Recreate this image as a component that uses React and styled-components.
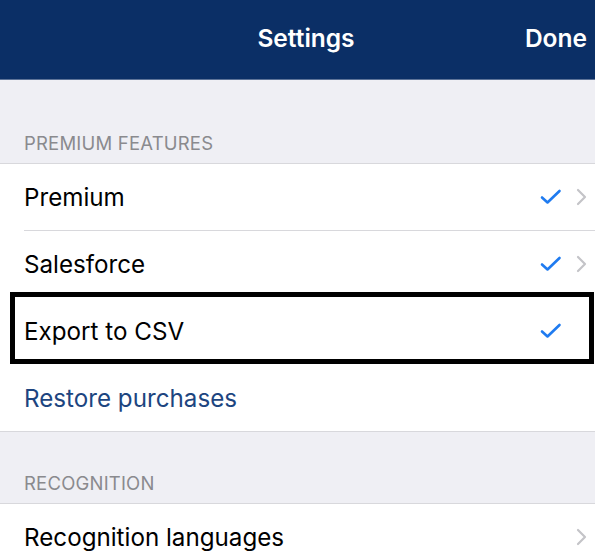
import React from "react";
import styled, { createGlobalStyle } from "styled-components";

const GlobalStyle = createGlobalStyle`
  html, body {
    margin: 0;
    padding: 0;
    background: #efeff4;
    font-family: Inter, "Liberation Sans", Arial, sans-serif;
    -webkit-font-smoothing: antialiased;
  }
`;

const Page = styled.div`
  width: 595px;
  height: 558px;
  overflow: hidden;
  background: #efeff4;
`;

const NavBar = styled.div`
  height: 79px;
  background: #0b2f66;
  border-bottom: 1px solid #5d7398;
  display: grid;
  grid-template-columns: 1fr auto 1fr;
  align-items: center;
  color: #ffffff;
  font-size: 24.5px;
  font-weight: 600;
`;

const Title = styled.div`
  padding-left: 17px;
  padding-bottom: 3px;
`;

const DoneButton = styled.div`
  justify-self: end;
  padding-right: 8px;
  padding-bottom: 3px;
`;

const SectionHeader = styled.div`
  height: ${(p) => p.$height}px;
  display: flex;
  align-items: flex-end;
  box-sizing: border-box;
  padding: 0 24px 9px;
  color: #8a8a8e;
  font-size: 18.5px;
  letter-spacing: 0.2px;
  border-bottom: 1px solid #d8d8dc;
`;

const Group = styled.div`
  background: #ffffff;
  border-bottom: 1px solid #d8d8dc;
`;

const Row = styled.div`
  position: relative;
  height: 66px;
  display: flex;
  align-items: center;
  padding: 0 8px 0 24px;
  font-size: 24.2px;
  color: ${(p) => (p.$link ? "#1d4580" : "#000000")};

  & + & {
    border-top: 1px solid transparent;
  }
  & + &::before {
    content: "";
    position: absolute;
    left: 24px;
    right: 0;
    top: -1px;
    height: 1px;
    background: #d8d8dc;
  }
  ${(p) =>
    p.$highlight &&
    `
    &::after {
      content: "";
      position: absolute;
      left: 10px;
      right: 1px;
      top: -6px;
      height: 72px;
      box-sizing: border-box;
      border: 5px solid #000000;
    }
  `}
`;

const Label = styled.div`
  flex: 1;
`;

const Accessory = styled.div`
  display: flex;
  align-items: center;
  gap: 14px;
`;

const Slot = styled.div`
  width: ${(p) => p.$w}px;
  display: flex;
  justify-content: center;
`;

const Check = () => (
  <svg width="22" height="16" viewBox="0 0 22 16">
    <path
      d="M2 8.5 L7.5 13.5 L19.5 2"
      fill="none"
      stroke="#1f7bf0"
      strokeWidth="2.6"
      strokeLinecap="round"
      strokeLinejoin="round"
    />
  </svg>
);

const Chevron = () => (
  <svg width="11" height="18" viewBox="0 0 11 18">
    <path
      d="M2 2 L9 9 L2 16"
      fill="none"
      stroke="#c4c4c8"
      strokeWidth="2.2"
      strokeLinecap="round"
      strokeLinejoin="round"
    />
  </svg>
);

const SettingRow = ({ label, checked, chevron, link, highlight }) => (
  <Row $link={link} $highlight={highlight}>
    <Label>{label}</Label>
    <Accessory>
      <Slot $w={22}>{checked && <Check />}</Slot>
      <Slot $w={11}>{chevron && <Chevron />}</Slot>
    </Accessory>
  </Row>
);

const App = () => {
  return (
    <>
      <GlobalStyle />
      <Page>
        <NavBar>
          <div />
          <Title>Settings</Title>
          <DoneButton>Done</DoneButton>
        </NavBar>
        <SectionHeader $height={84}>PREMIUM FEATURES</SectionHeader>
        <Group>
          <SettingRow label="Premium" checked chevron />
          <SettingRow label="Salesforce" checked chevron />
          <SettingRow label="Export to CSV" checked highlight />
          <SettingRow label="Restore purchases" link />
        </Group>
        <SectionHeader $height={72}>RECOGNITION</SectionHeader>
        <Group>
          <SettingRow label="Recognition languages" chevron />
        </Group>
      </Page>
    </>
  );
};

export default App;
